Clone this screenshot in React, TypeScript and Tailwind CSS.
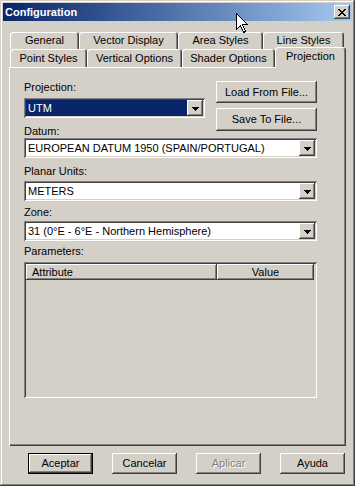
import React from "react";

const raised =
  "shadow-[inset_-1px_-1px_#404040,inset_1px_1px_#ffffff,inset_-2px_-2px_#808080,inset_2px_2px_#d4d0c8]";
const sunken =
  "shadow-[inset_1px_1px_#808080,inset_-1px_-1px_#ffffff,inset_2px_2px_#404040,inset_-2px_-2px_#d4d0c8]";

function Arrow() {
  return (
    <svg width="7" height="4" viewBox="0 0 7 4" shapeRendering="crispEdges">
      <rect x="0" y="0" width="7" height="1" fill="#000" />
      <rect x="1" y="1" width="5" height="1" fill="#000" />
      <rect x="2" y="2" width="3" height="1" fill="#000" />
      <rect x="3" y="3" width="1" height="1" fill="#000" />
    </svg>
  );
}

function Select({ value, selected }: { value: string; selected?: boolean }) {
  return (
    <div className={`flex h-[20px] bg-white p-[2px] ${sunken}`}>
      <div
        className={`flex-1 flex items-center pl-[2px] whitespace-nowrap overflow-hidden ${
          selected ? "bg-[#0a246a] text-white" : "text-black"
        }`}
      >
        {value}
      </div>
      <div className={`w-[16px] h-[16px] bg-[#d4d0c8] flex items-center justify-center pt-[1px] ${raised}`}>
        <Arrow />
      </div>
    </div>
  );
}

function Tab({ label, w }: { label: string; w: string }) {
  return (
    <div
      className={`${w} h-full flex items-center justify-center rounded-t-[3px] bg-[#d4d0c8] shadow-[inset_1px_1px_#ffffff,inset_-1px_0_#404040,inset_-2px_0_#808080] whitespace-nowrap`}
    >
      {label}
    </div>
  );
}

function Btn({ label, className = "" }: { label: string; className?: string }) {
  return (
    <div className={`flex items-center justify-center bg-[#d4d0c8] ${raised} ${className}`}>{label}</div>
  );
}

export default function App() {
  return (
    <div className="relative w-[355px] h-[486px] bg-[#d4d0c8] p-[3px] shadow-[inset_-1px_-1px_#404040,inset_1px_1px_#d4d0c8,inset_-2px_-2px_#808080,inset_2px_2px_#ffffff] font-['Liberation_Sans',Arial,sans-serif] text-[11px] leading-[13px] text-black select-none">
      {/* Title bar */}
      <div className="h-[18px] flex items-center justify-between bg-linear-to-r from-[#0a246a] to-[#a6caf0] pl-[2px] pr-[2px]">
        <span className="font-bold text-white text-[11px]">Configuration</span>
        <div className={`w-[16px] h-[14px] bg-[#d4d0c8] flex items-center justify-center ${raised}`}>
          <svg width="8" height="7" viewBox="0 0 8 7" shapeRendering="crispEdges">
            <path d="M0 0h2v1h-2z M6 0h2v1h-2z M1 1h2v1h-2z M5 1h2v1h-2z M2 2h4v1h-4z M3 3h2v1h-2z M2 4h4v1h-4z M1 5h2v1h-2z M5 5h2v1h-2z M0 6h2v1h-2z M6 6h2v1h-2z" fill="#000" />
          </svg>
        </div>
      </div>

      {/* Tabs */}
      <div className="mt-[11px] ml-[7px] flex flex-col">
        <div className="flex h-[17px]">
          <Tab label="General" w="w-[69px]" />
          <Tab label="Vector Display" w="w-[99px]" />
          <Tab label="Area Styles" w="w-[85px]" />
          <Tab label="Line Styles" w="w-[81px]" />
        </div>
        <div className="flex h-[18px] items-start">
          <Tab label="Point Styles" w="w-[77px]" />
          <Tab label="Vertical Options" w="w-[95px]" />
          <Tab label="Shader Options" w="w-[93px]" />
          <div className="relative z-10 -mt-[2px] w-[71px] h-[21px] flex items-center justify-center rounded-t-[3px] bg-[#d4d0c8] shadow-[inset_1px_1px_#ffffff,inset_-1px_0_#404040,inset_-2px_0_#808080] pb-[2px]">
            Projection
          </div>
        </div>
      </div>

      {/* Panel */}
      <div
        className={`ml-[6px] w-[337px] h-[379px] pt-[14px] pl-[15px] shadow-[inset_1px_1px_#ffffff,inset_-1px_-1px_#404040,inset_-2px_-2px_#808080]`}
      >
        <div className="w-[293px] flex flex-col">
          <div className="flex items-start">
            <div className="w-[181px] flex flex-col">
              <div className="h-[13px]">Projection:</div>
              <div className="mt-[4px]">
                <Select value="UTM" selected />
              </div>
              <div className="mt-[7px] h-[13px]">Datum:</div>
            </div>
            <div className="ml-[11px] w-[101px] flex flex-col">
              <Btn label="Load From File..." className="h-[22px]" />
              <Btn label="Save To File..." className="mt-[5px] h-[23px]" />
            </div>
          </div>
          <Select value="EUROPEAN DATUM 1950 (SPAIN/PORTUGAL)" />
          <div className="mt-[7px] h-[13px]">Planar Units:</div>
          <div className="mt-[3px]">
            <Select value="METERS" />
          </div>
          <div className="mt-[5px] h-[13px]">Zone:</div>
          <div className="mt-[2px]">
            <Select value="31 (0°E - 6°E - Northern Hemisphere)" />
          </div>
          <div className="mt-[4px] h-[13px]">Parameters:</div>
          <div className={`mt-[4px] h-[136px] p-[2px] bg-[#d4d0c8] ${sunken}`}>
            <div className="flex h-[16px]">
              <div className={`w-[191px] h-full flex items-center pl-[6px] ${raised}`}>Attribute</div>
              <div className={`w-[97px] h-full flex items-center justify-center ${raised}`}>Value</div>
            </div>
          </div>
        </div>
      </div>

      {/* Bottom buttons */}
      <div className="mt-[7px] ml-[25px] flex gap-[19px]">
        <div className="w-[65px] h-[21px] border border-black">
          <Btn label="Aceptar" className="w-full h-full" />
        </div>
        <Btn label="Cancelar" className="w-[65px] h-[21px]" />
        <Btn
          label="Aplicar"
          className="w-[65px] h-[21px] text-[#808080] [text-shadow:1px_1px_#ffffff]"
        />
        <Btn label="Ayuda" className="w-[65px] h-[21px]" />
      </div>

      {/* Mouse cursor */}
      <svg
        className="absolute left-[236px] top-[13px]"
        width="13"
        height="21"
        viewBox="0 0 13 21"
        shapeRendering="crispEdges"
      >
        <path
          d="M0.5 0.5 L0.5 16.5 L4.5 12.5 L7.5 19.5 L9.5 18.5 L6.5 11.5 L11.5 11.5 Z"
          fill="#ffffff"
          stroke="#000000"
          strokeWidth="1"
        />
      </svg>
    </div>
  );
}
